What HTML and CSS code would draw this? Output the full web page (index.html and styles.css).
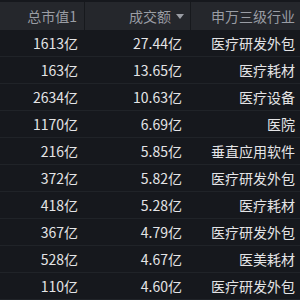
FILE: index.html
```html
<!DOCTYPE html>
<html>
<head>
<meta charset="utf-8">
<link rel="stylesheet" href="styles.css">
</head>
<body>
<div class="table">
  <div class="row head">
    <div class="c c1">总市值1</div>
    <div class="c c2">成交额<span class="arrow"></span></div>
    <div class="c c3">申万三级行业</div>
  </div>
  <div class="row"><div class="c c1">1613亿</div><div class="c c2">27.44亿</div><div class="c c3">医疗研发外包</div></div>
  <div class="row"><div class="c c1">163亿</div><div class="c c2">13.65亿</div><div class="c c3">医疗耗材</div></div>
  <div class="row"><div class="c c1">2634亿</div><div class="c c2">10.63亿</div><div class="c c3">医疗设备</div></div>
  <div class="row"><div class="c c1">1170亿</div><div class="c c2">6.69亿</div><div class="c c3">医院</div></div>
  <div class="row"><div class="c c1">216亿</div><div class="c c2">5.85亿</div><div class="c c3">垂直应用软件</div></div>
  <div class="row"><div class="c c1">372亿</div><div class="c c2">5.82亿</div><div class="c c3">医疗研发外包</div></div>
  <div class="row"><div class="c c1">418亿</div><div class="c c2">5.28亿</div><div class="c c3">医疗耗材</div></div>
  <div class="row"><div class="c c1">367亿</div><div class="c c2">4.79亿</div><div class="c c3">医疗研发外包</div></div>
  <div class="row"><div class="c c1">528亿</div><div class="c c2">4.67亿</div><div class="c c3">医美耗材</div></div>
  <div class="row"><div class="c c1">110亿</div><div class="c c2">4.60亿</div><div class="c c3">医疗研发外包</div></div>
</div>
</body>
</html>
```
FILE: styles.css
```css
html, body {
  margin: 0;
  padding: 0;
  background: #16181d;
  width: 300px;
  height: 300px;
  overflow: hidden;
}
.table {
  padding-top: 2px;
  font-family: "Noto Sans CJK SC", "Noto Sans", sans-serif;
  font-size: 14px;
  color: #e4e4e6;
}
.row {
  display: grid;
  grid-template-columns: 85px 106px 109px;
  height: 27px;
  align-items: center;
  border-bottom: 1px solid #202328;
  box-sizing: border-box;
}
.row.head {
  height: 28px;
  background: #25272c;
  color: #9a9da4;
  border-bottom: none;
}
.c {
  text-align: right;
  height: 100%;
  display: flex;
  align-items: center;
  justify-content: flex-end;
  white-space: nowrap;
}
.c1 { padding-right: 7px; }
.c2 { padding-right: 9px; }
.c3 { padding-right: 5px; }
.head .c1, .head .c2 { border-right: 1px solid #17191d; }
.head .c2 { padding-right: 6px; }
.arrow {
  display: inline-block;
  width: 0;
  height: 0;
  border-left: 4px solid transparent;
  border-right: 4px solid transparent;
  border-top: 5px solid #9a9da4;
  margin-left: 5px;
}
```
